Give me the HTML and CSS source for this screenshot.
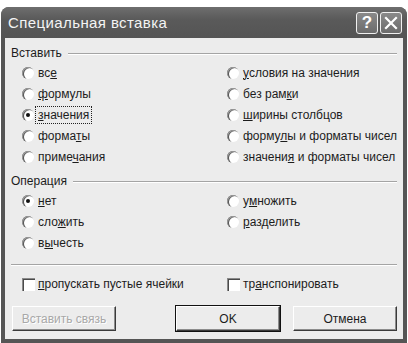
FILE: index.html
```html
<!DOCTYPE html>
<html lang="ru">
<head>
<meta charset="utf-8">
<title>Специальная вставка</title>
<link rel="stylesheet" href="styles.css">
</head>
<body>
<div class="window">
  <div class="titlebar">
    <span class="title">Специальная вставка</span>
    <div class="tb-buttons">
      <span class="tb-btn">?</span>
      <span class="tb-btn tb-close"><svg width="14" height="14" viewBox="0 0 14 14"><path d="M2 2 L12 12 M12 2 L2 12" stroke="#fff" stroke-width="2.2" stroke-linecap="square"/></svg></span>
    </div>
  </div>
  <div class="content">
    <div class="group-head"><span>Вставить</span><span class="rule"></span></div>
    <div class="options">
      <label class="opt"><span class="radio"></span><span>вс<u>е</u></span></label>
      <label class="opt"><span class="radio"></span><span><u>у</u>словия на значения</span></label>
      <label class="opt"><span class="radio"></span><span><u>ф</u>ормулы</span></label>
      <label class="opt"><span class="radio"></span><span>без рам<u>к</u>и</span></label>
      <label class="opt"><span class="radio on"></span><span class="focus"><u>з</u>начения</span></label>
      <label class="opt"><span class="radio"></span><span><u>ш</u>ирины столбцов</span></label>
      <label class="opt"><span class="radio"></span><span>форма<u>т</u>ы</span></label>
      <label class="opt"><span class="radio"></span><span>форму<u>л</u>ы и форматы чисел</span></label>
      <label class="opt"><span class="radio"></span><span>приме<u>ч</u>ания</span></label>
      <label class="opt"><span class="radio"></span><span>значени<u>я</u> и форматы чисел</span></label>
    </div>
    <div class="group-head second"><span>Операция</span><span class="rule"></span></div>
    <div class="options">
      <label class="opt"><span class="radio on"></span><span><u>н</u>ет</span></label>
      <label class="opt"><span class="radio"></span><span>у<u>м</u>ножить</span></label>
      <label class="opt"><span class="radio"></span><span>сло<u>ж</u>ить</span></label>
      <label class="opt"><span class="radio"></span><span><u>р</u>азделить</span></label>
      <label class="opt"><span class="radio"></span><span>в<u>ы</u>честь</span></label>
    </div>
    <div class="separator"></div>
    <div class="options checks">
      <label class="opt"><span class="check"></span><span><u>п</u>ропускать пустые ячейки</span></label>
      <label class="opt"><span class="check"></span><span>тр<u>а</u>нспонировать</span></label>
    </div>
    <div class="buttons">
      <span class="btn disabled">Вставить связь</span>
      <span class="spacer"></span>
      <span class="btn default">OK</span>
      <span class="btn">Отмена</span>
    </div>
  </div>
</div>
</body>
</html>
```
FILE: styles.css
```css
html, body {
  margin: 0;
  padding: 0;
  background: #ffffff;
}
body {
  font-family: "Liberation Sans", "DejaVu Sans", sans-serif;
  font-size: 12px;
  color: #1c1c1c;
  overflow: hidden;
}
.window {
  margin: 7px 0 0 1px;
  width: 406px;
  height: 336px;
  box-sizing: border-box;
  background: #555555;
  border-radius: 8px 8px 0 0;
  padding: 0 4px 4px 4px;
  display: flex;
  flex-direction: column;
}
.titlebar {
  height: 31px;
  display: flex;
  align-items: center;
  justify-content: space-between;
  background: linear-gradient(#6e6e6e, #5a5a5a 40%, #545454);
  border-radius: 8px 8px 0 0;
  margin: 0 -4px;
  padding: 0 5px 0 7px;
}
.title {
  color: #f4f4f4;
  font-size: 15px;
  letter-spacing: 0.4px;
  font-family: "Liberation Sans", "DejaVu Sans", sans-serif;
}
.tb-buttons {
  display: flex;
  gap: 2px;
}
.tb-btn {
  width: 20px;
  height: 20px;
  border: 1px solid #f0f0f0;
  border-radius: 3px;
  background: linear-gradient(#8a8a8a, #6c6c6c);
  color: #ffffff;
  font-weight: bold;
  font-size: 17px;
  display: flex;
  align-items: center;
  justify-content: center;
  line-height: 1;
}
.content {
  flex: 1;
  background: #ececec;
  padding: 8px 6px 0 6px;
}
.group-head {
  display: flex;
  align-items: center;
  gap: 6px;
  height: 15px;
  line-height: 15px;
}
.group-head.second {
  margin-top: 7px;
}
.rule {
  flex: 1;
  border-top: 1px solid #a4a4a4;
  border-bottom: 1px solid #ffffff;
}
.options {
  display: grid;
  grid-template-columns: 205px 1fr;
  grid-auto-rows: 21px;
  padding-left: 11px;
  margin-top: 1px;
}
.opt {
  display: flex;
  align-items: center;
  gap: 4px;
  white-space: nowrap;
}
.radio {
  width: 12px;
  height: 12px;
  border-radius: 50%;
  background: #ffffff;
  box-shadow: inset 1px 1px 0 #9a9a9a, inset 2px 1px 0 #555555;
  position: relative;
  flex: none;
}
.radio.on::after {
  content: "";
  position: absolute;
  left: 4px;
  top: 4px;
  width: 4px;
  height: 4px;
  border-radius: 50%;
  background: #111111;
}
.focus {
  outline: 1px dotted #222222;
  outline-offset: 1px;
  padding: 0 1px;
  margin-left: -1px;
}
.separator {
  margin: 11px 0 0 0;
  border-top: 1px solid #a4a4a4;
  border-bottom: 1px solid #ffffff;
}
.checks {
  margin-top: 8px;
  grid-auto-rows: 20px;
}
.checks .opt {
  gap: 3px;
}
.check {
  width: 13px;
  height: 13px;
  background: #ffffff;
  box-shadow: inset 1px 1px 0 #8a8a8a, inset 2px 2px 0 #4a4a4a;
  flex: none;
}
.buttons {
  display: flex;
  margin-top: 12px;
  padding-left: 1px;
  gap: 13px;
}
.spacer {
  flex: 1;
}
.btn {
  width: 104px;
  height: 25px;
  box-sizing: border-box;
  display: flex;
  align-items: center;
  justify-content: center;
  background: #ececec;
  border: 1px solid;
  border-color: #ffffff #3a3a3a #3a3a3a #ffffff;
  box-shadow: inset -1px -1px 0 #8c8c8c;
}
.btn.default {
  outline: 1px solid #111111;
}
.btn.disabled {
  color: #a8a8a8;
  text-shadow: 1px 1px 0 #ffffff;
}
```
